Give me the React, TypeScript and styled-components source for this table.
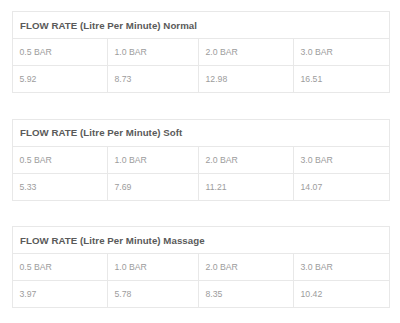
import React from "react";
import styled, { createGlobalStyle } from "styled-components";

const Global = createGlobalStyle`
  html, body { margin: 0; padding: 0; background: #ffffff; }
  body { font-family: "Liberation Sans", Arial, Helvetica, sans-serif; }
`;

const Page = styled.div`
  padding: 11px 11px 0 12px;
  display: flex;
  flex-direction: column;
  gap: 25.5px;
`;

const Table = styled.table`
  width: 377px;
  border-collapse: collapse;
  table-layout: fixed;
`;

const HeadCell = styled.th`
  height: 26px;
  padding: 0 7px;
  border: 1px solid #e8e8e8;
  text-align: left;
  font-size: 9.7px;
  font-weight: 700;
  letter-spacing: 0.05px;
  color: #5a5a5a;
  white-space: nowrap;
`;

const Cell = styled.td`
  height: 26px;
  padding: 0 6.5px;
  border: 1px solid #e8e8e8;
  text-align: left;
  font-size: 8.7px;
  font-weight: 400;
  color: #9c9c9c;
  white-space: nowrap;
`;

const widths = [95, 91, 95, 96];
const pressures = ["0.5 BAR", "1.0 BAR", "2.0 BAR", "3.0 BAR"];

const data = [
  { mode: "Normal", values: ["5.92", "8.73", "12.98", "16.51"] },
  { mode: "Soft", values: ["5.33", "7.69", "11.21", "14.07"] },
  { mode: "Massage", values: ["3.97", "5.78", "8.35", "10.42"] },
];

function FlowTable({ mode, values }: { mode: string; values: string[] }) {
  return (
    <Table>
      <colgroup>
        {widths.map((w, i) => (
          <col key={i} style={{ width: w }} />
        ))}
      </colgroup>
      <thead>
        <tr>
          <HeadCell colSpan={4}>FLOW RATE (Litre Per Minute) {mode}</HeadCell>
        </tr>
      </thead>
      <tbody>
        <tr>
          {pressures.map((p) => (
            <Cell key={p}>{p}</Cell>
          ))}
        </tr>
        <tr>
          {values.map((v, i) => (
            <Cell key={i}>{v}</Cell>
          ))}
        </tr>
      </tbody>
    </Table>
  );
}

export default function App() {
  return (
    <>
      <Global />
      <Page>
        {data.map((d) => (
          <FlowTable key={d.mode} mode={d.mode} values={d.values} />
        ))}
      </Page>
    </>
  );
}
